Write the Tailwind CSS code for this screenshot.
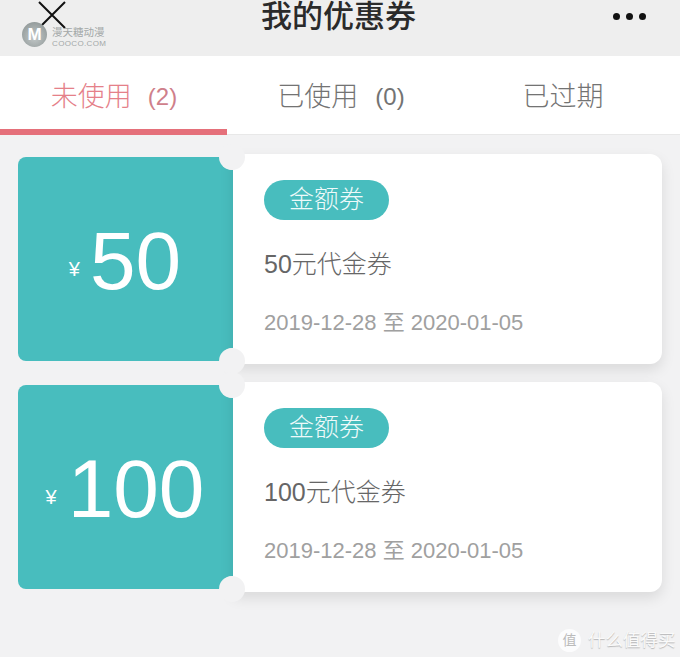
<!DOCTYPE html>
<html lang="zh">
<head>
<meta charset="utf-8">
<script src="https://cdn.jsdelivr.net/npm/@tailwindcss/browser@4"></script>
</head>
<body class="bg-[#f2f2f3]">
<div class="relative w-[680px] h-[657px] overflow-hidden bg-[#f2f2f3] font-['Liberation_Sans','Noto_Sans_CJK_SC',sans-serif]">
  <header class="relative flex h-[56px] items-center justify-between bg-[#eeeeee] pl-[38px] pr-[34px]">
    <svg class="mb-[26px] h-[28px] w-[28px]" viewBox="0 0 28 28" fill="none" stroke="#111" stroke-width="2"><path d="M1 1L27 27M27 1L1 27"/></svg>
    <h1 class="absolute left-[261px] top-[-3px] text-[31px] leading-[40px] font-medium text-[#2a2a2a]">我的优惠券</h1>
    <div class="mb-[24px] flex gap-[6px]">
      <span class="h-[7px] w-[7px] rounded-full bg-[#111]"></span>
      <span class="h-[7px] w-[7px] rounded-full bg-[#111]"></span>
      <span class="h-[7px] w-[7px] rounded-full bg-[#111]"></span>
    </div>
  </header>

  <nav class="relative flex h-[79px] items-start border-b-[1px] border-[#e8e8e8] bg-white text-[27px] font-light leading-[36px] text-[#737373]">
    <div class="flex w-[227px] justify-center pl-[1px] pt-[23px] text-[#e58089]">未使用<span class="ml-[16px] text-[24px] text-[#cf7f8b]">(2)</span></div>
    <div class="flex w-[227px] justify-center pl-[1px] pt-[23px]">已使用<span class="ml-[17px] text-[24px]">(0)</span></div>
    <div class="flex w-[218px] justify-center pt-[23px]">已过期</div>
    <span class="absolute bottom-[-1px] left-0 h-[6px] w-[227px] bg-[#e5707a]"></span>
  </nav>

  <main class="flex flex-col gap-[18px] pl-[18px] pt-[19px]">
    <article class="flex h-[210px] w-[644px] items-center">
      <div class="relative flex h-[204px] w-[215px] items-center justify-center overflow-hidden rounded-l-[8px] bg-[#48bdbe] pr-[1px] text-white">
        <span class="mr-[10px] mt-[19px] text-[20px] leading-none">¥</span><span class="mt-[3px] text-[82px] leading-none">50</span>
        <span class="absolute right-[-13px] top-[-13px] h-[26px] w-[26px] rounded-full bg-[#f2f2f3]"></span>
        <span class="absolute bottom-[-13px] right-[-13px] h-[26px] w-[26px] rounded-full bg-[#f2f2f3]"></span>
      </div>
      <div class="relative flex h-[210px] flex-1 flex-col items-start rounded-r-[12px] bg-white pl-[31px] pt-[26px] shadow-[0_6px_14px_rgba(0,0,0,0.1)]">
        <span class="flex h-[40px] w-[125px] items-center justify-center rounded-full bg-[#48bdbe] text-[25px] font-light text-[#effafa]">金额券</span>
        <p class="mt-[27px] text-[25px] font-light leading-[34px] text-[#666]">50元代金券</p>
        <p class="mt-[27px] text-[22px] leading-[30px] text-[#a0a0a0]">2019-12-28 至 2020-01-05</p>
        <span class="absolute left-[-14px] top-[-10px] h-[26px] w-[26px] rounded-full bg-[#f2f2f3]"></span>
        <span class="absolute bottom-[-10px] left-[-14px] h-[26px] w-[26px] rounded-full bg-[#f2f2f3]"></span>
      </div>
    </article>

    <article class="flex h-[210px] w-[644px] items-center">
      <div class="relative flex h-[204px] w-[215px] items-center justify-center overflow-hidden rounded-l-[8px] bg-[#48bdbe] pr-[1px] text-white">
        <span class="mr-[11px] mt-[19px] text-[20px] leading-none">¥</span><span class="mt-[3px] text-[82px] leading-none">100</span>
        <span class="absolute right-[-13px] top-[-13px] h-[26px] w-[26px] rounded-full bg-[#f2f2f3]"></span>
        <span class="absolute bottom-[-13px] right-[-13px] h-[26px] w-[26px] rounded-full bg-[#f2f2f3]"></span>
      </div>
      <div class="relative flex h-[210px] flex-1 flex-col items-start rounded-r-[12px] bg-white pl-[31px] pt-[26px] shadow-[0_6px_14px_rgba(0,0,0,0.1)]">
        <span class="flex h-[40px] w-[125px] items-center justify-center rounded-full bg-[#48bdbe] text-[25px] font-light text-[#effafa]">金额券</span>
        <p class="mt-[27px] text-[25px] font-light leading-[34px] text-[#666]">100元代金券</p>
        <p class="mt-[27px] text-[22px] leading-[30px] text-[#a0a0a0]">2019-12-28 至 2020-01-05</p>
        <span class="absolute left-[-14px] top-[-10px] h-[26px] w-[26px] rounded-full bg-[#f2f2f3]"></span>
        <span class="absolute bottom-[-10px] left-[-14px] h-[26px] w-[26px] rounded-full bg-[#f2f2f3]"></span>
      </div>
    </article>
  </main>

  <!-- Photo watermarks -->
  <div class="absolute left-[22px] top-[22px] flex items-start gap-[5px]">
    <span class="flex h-[25px] w-[25px] items-center justify-center rounded-full bg-[radial-gradient(circle_at_50%_60%,#c4caca,#858d8d)] text-[17px] font-bold leading-none text-white">M</span>
    <div class="mt-[4px] flex flex-col text-[#a3a8a8]">
      <span class="text-[10.5px] leading-[12px]">漫天糖动漫</span>
      <span class="mt-[1px] text-[8px] leading-[10px] tracking-[0.35px]">COOCO.COM</span>
    </div>
  </div>
  <div class="absolute left-[558px] top-[628px] flex items-center gap-[7px]">
    <span class="flex h-[23px] w-[23px] items-center justify-center rounded-full bg-white/80 text-[14px] leading-none text-[#bbb]">值</span>
    <span class="text-[17.5px] leading-[24px] text-[#fafafa] [text-shadow:0_1px_1px_rgba(0,0,0,0.25)]">什么值得买</span>
  </div>
</div>
</body>
</html>
